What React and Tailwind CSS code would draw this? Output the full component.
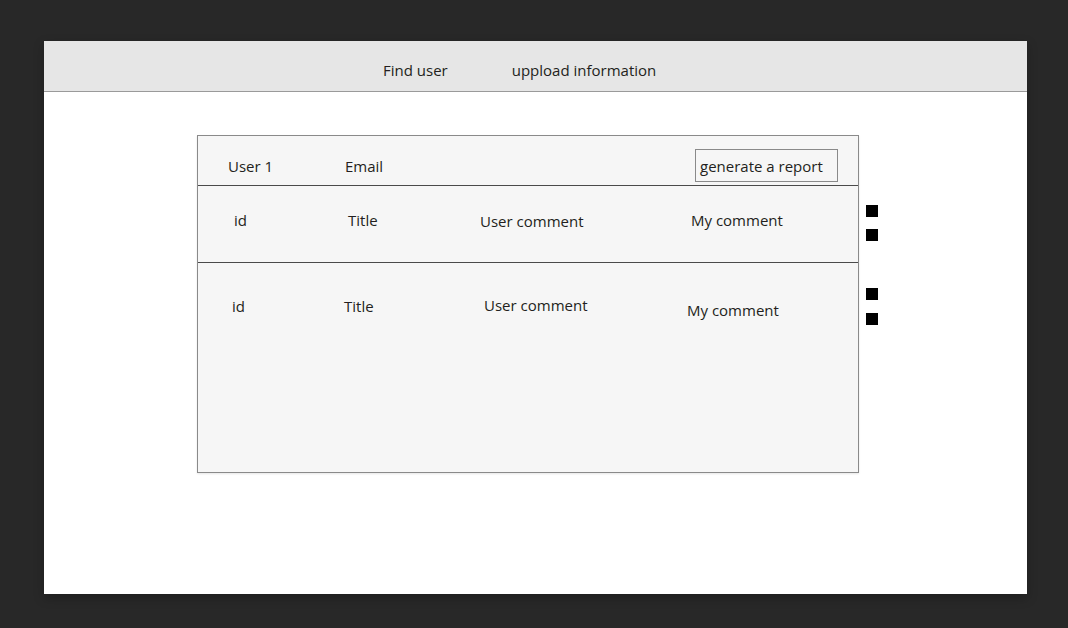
import React from "react";

const ROWS = [
  {
    h: "h-[77px]",
    cells: [
      { text: "id", cls: "ml-[36px] w-[114px] mt-[24px]" },
      { text: "Title", cls: "w-[132px] mt-[24px]" },
      { text: "User comment", cls: "w-[211px] mt-[25px]" },
      { text: "My comment", cls: "mt-[24px]" },
    ],
  },
  {
    h: "flex-1",
    cells: [
      { text: "id", cls: "ml-[34px] w-[112px] mt-[33px]" },
      { text: "Title", cls: "w-[140px] mt-[33px]" },
      { text: "User comment", cls: "w-[203px] mt-[32px]" },
      { text: "My comment", cls: "mt-[37px]" },
    ],
  },
];

function Square({ cls }) {
  return <span className={"block h-[12px] w-[12px] bg-black " + cls} />;
}

export default function App() {
  return (
    <main
      className="min-h-[628px] bg-[#282828] pl-[44px] pt-[41px] text-[#231f20]"
      style={{ fontFamily: "'Open Sans', 'Liberation Sans', sans-serif" }}
    >
      <div className="flex h-[553px] w-[983px] flex-col bg-white shadow-[0_4px_10px_rgba(0,0,0,0.25)]">
        {/* top nav */}
        <nav className="flex h-[51px] items-center gap-[64px] border-b border-[#9a9a9a] bg-[#e6e6e6] pl-[339px] pt-[8px] text-[15px] leading-[20px]">
          <span>Find user</span>
          <span>uppload information</span>
        </nav>

        <div className="flex pl-[153px] pt-[43px]">
          {/* user card */}
          <section className="flex h-[338px] w-[662px] flex-col border border-[#8a8a8a] bg-[#f6f6f6] text-[15px] leading-[20px] shadow-[0_1px_2px_rgba(0,0,0,0.1)]">
            <header className="flex h-[50px] items-start border-b border-[#4a4a4a]">
              <span className="ml-[30px] mt-[20px] w-[117px]">User 1</span>
              <span className="mt-[20px] w-[350px]">Email</span>
              <button className="mt-[13px] h-[33px] w-[143px] border border-[#8a8a8a] bg-[#f6f6f6] pl-[4px] text-left text-[15px] leading-[20px]">
                generate a report
              </button>
            </header>
            {ROWS.map((row, i) => (
              <div
                key={i}
                className={
                  "flex items-start " +
                  row.h +
                  (i === 0 ? " border-b border-[#4a4a4a]" : "")
                }
              >
                {row.cells.map((c) => (
                  <span key={c.text} className={c.cls}>
                    {c.text}
                  </span>
                ))}
              </div>
            ))}
          </section>

          {/* row actions */}
          <div className="ml-[7px] flex flex-col pt-[70px]">
            <Square cls="" />
            <Square cls="mt-[12px]" />
            <Square cls="mt-[47px]" />
            <Square cls="mt-[13px]" />
          </div>
        </div>
      </div>
    </main>
  );
}
